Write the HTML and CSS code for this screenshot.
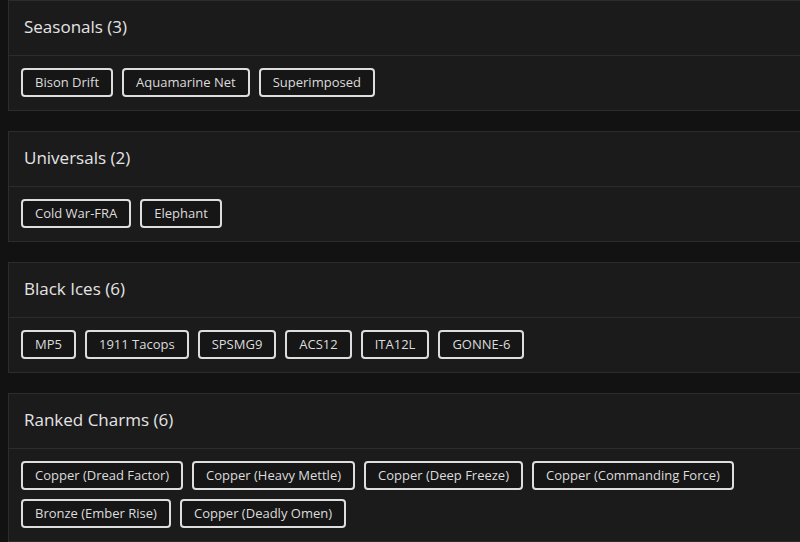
FILE: index.html
```html
<!DOCTYPE html>
<html lang="en">
<head>
    <meta charset="UTF-8">
    <meta name="viewport" content="width=device-width, initial-scale=1.0">
    <title>Collection</title>
    <link rel="stylesheet" href="styles.css">
</head>
<body>
    <div class="container">
        <div class="card">
            <div class="card-header">Seasonals (3)</div>
            <div class="card-body">
                <span class="tag">Bison Drift</span>
                <span class="tag">Aquamarine Net</span>
                <span class="tag">Superimposed</span>
            </div>
        </div>

        <div class="card">
            <div class="card-header">Universals (2)</div>
            <div class="card-body">
                <span class="tag">Cold War-FRA</span>
                <span class="tag">Elephant</span>
            </div>
        </div>

        <div class="card">
            <div class="card-header">Black Ices (6)</div>
            <div class="card-body">
                <span class="tag">MP5</span>
                <span class="tag">1911 Tacops</span>
                <span class="tag">SPSMG9</span>
                <span class="tag">ACS12</span>
                <span class="tag">ITA12L</span>
                <span class="tag">GONNE-6</span>
            </div>
        </div>

        <div class="card">
            <div class="card-header">Ranked Charms (6)</div>
            <div class="card-body">
                <span class="tag">Copper (Dread Factor)</span>
                <span class="tag">Copper (Heavy Mettle)</span>
                <span class="tag">Copper (Deep Freeze)</span>
                <span class="tag">Copper (Commanding Force)</span>
                <span class="tag">Bronze (Ember Rise)</span>
                <span class="tag">Copper (Deadly Omen)</span>
            </div>
        </div>
    </div>
</body>
</html>
```

FILE: styles.css
```css
body {
    margin: 0;
    background-color: #121212;
    font-family: "Open Sans", "Noto Sans", Arial, sans-serif;
    color: #e4e4e4;
    overflow: hidden;
}

.container {
    padding-left: 8px;
}

.card {
    background-color: #1b1b1b;
    border: 1px solid #2c2c2c;
    border-right: none;
    margin-bottom: 20px;
}

.card-header {
    height: 51px;
    display: flex;
    align-items: center;
    padding: 0 15px 3px;
    border-bottom: 1px solid #2c2c2c;
    font-size: 17px;
    font-weight: 500;
}

.card-body {
    display: flex;
    flex-wrap: wrap;
    gap: 9px;
    padding: 12px 12px 13px;
}

.tag {
    padding: 5px 12px;
    line-height: 15px;
    font-size: 13px;
    color: #dcdcdc;
    background-color: #161616;
    border: 2px solid #dedede;
    border-radius: 4px;
}
```
